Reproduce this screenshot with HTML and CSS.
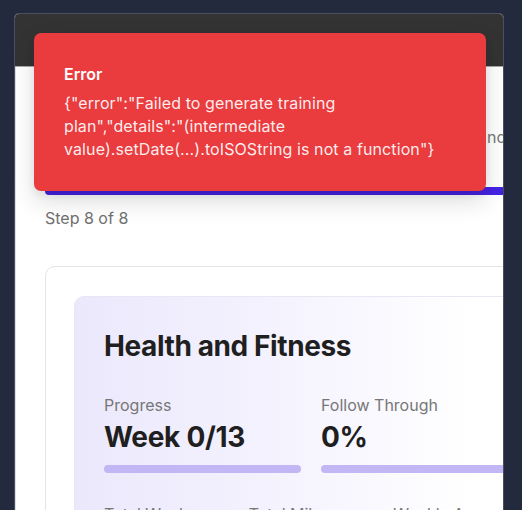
FILE: index.html
```html
<!DOCTYPE html>
<html lang="en">
<head>
<meta charset="utf-8">
<title>Training Plan</title>
<link rel="stylesheet" href="styles.css">
</head>
<body>
<div class="window">
  <div class="titlebar"></div>
  <div class="content">
    <div class="page">
      <h1 class="page-title">Create Your Plan</h1>
      <p class="subtitle"><span class="lead">Review your goals and schedule a</span>nd generate your training plan.</p>
      <div class="progress"><div class="progress-fill"></div></div>
      <p class="step">Step 8 of 8</p>
      <section class="card">
        <div class="plan">
          <h2 class="plan-title">Health and Fitness</h2>
          <div class="stats">
            <div class="stat">
              <div class="stat-label">Progress</div>
              <div class="stat-value">Week 0/13</div>
              <div class="bar"></div>
            </div>
            <div class="stat">
              <div class="stat-label">Follow Through</div>
              <div class="stat-value">0%</div>
              <div class="bar"></div>
            </div>
          </div>
          <div class="totals">
            <div class="stat-label">Total Weeks</div>
            <div class="stat-label">Total Miles</div>
            <div class="stat-label">Weekly Average</div>
          </div>
        </div>
      </section>
    </div>
  </div>
</div>
<div class="toast" role="alert">
  <div class="toast-title">Error</div>
  <div class="toast-body">{"error":"Failed to generate training <span class="nobr">plan","details":"(intermediate</span> <span class="nobr">value).setDate(...).toISOString</span> is not a function"}</div>
</div>
</body>
</html>
```

FILE: styles.css
```css
* { box-sizing: border-box; }
html, body { height: 100%; }
body {
  margin: 0;
  padding: 13px 0 0 14px;
  background: #242a3d;
  font-family: Inter, "Noto Sans", sans-serif;
  overflow: hidden;
}
.window {
  width: 490px;
  height: 497px;
  border: 1px solid #4b5060;
  border-bottom: none;
  border-radius: 5px 5px 0 0;
  overflow: hidden;
  background: #ffffff;
  display: flex;
  flex-direction: column;
}
.titlebar {
  height: 53px;
  flex-shrink: 0;
  background: #333333;
  border-bottom: 1px solid #a9a9a9;
}
.content {
  flex: 1;
  border-left: 1px solid #dedede;
  padding: 30px 0 0 29px;
  overflow: hidden;
}
.page {
  width: 533px;
}
.page-title {
  margin: 0;
  height: 30px;
  font-size: 24px;
  line-height: 30px;
  font-weight: 700;
  color: #1c1c1c;
}
.subtitle {
  margin: 0;
  font-size: 16px;
  line-height: 20px;
  color: #777777;
  white-space: nowrap;
}
.lead {
  display: inline-block;
  width: 442px;
  overflow: hidden;
  vertical-align: bottom;
  color: #777777;
}
.progress {
  margin-top: 40px;
  height: 8px;
  border-radius: 4px;
  background: #e6e3fb;
  overflow: hidden;
}
.progress-fill {
  height: 100%;
  width: 100%;
  background: #4522e4;
}
.step {
  margin: 13px 0 0;
  font-size: 16px;
  line-height: 20px;
  color: #707070;
}
.card {
  margin-top: 38px;
  border: 1px solid #e4e4e4;
  border-radius: 10px;
  padding: 29px 28px;
  background: #ffffff;
}
.plan {
  border: 1px solid #e9e7f4;
  border-radius: 10px;
  padding: 32px 29px 30px 29px;
  background: linear-gradient(90deg, #ebe8fc 0%, #f5f3fe 45%, #ffffff 85%);
}
.plan-title {
  margin: 0;
  font-size: 28px;
  line-height: 34px;
  font-weight: 700;
  color: #1f1f1f;
  letter-spacing: -0.4px;
}
.stats {
  margin-top: 30px;
  display: grid;
  grid-template-columns: 1fr 1fr;
  column-gap: 20px;
  width: 414px;
}
.stat-label {
  font-size: 16px;
  line-height: 24px;
  color: #777777;
  white-space: nowrap;
}
.stat-value {
  margin-top: 3px;
  font-size: 28px;
  line-height: 34px;
  font-weight: 700;
  color: #1f1f1f;
  letter-spacing: -0.3px;
}
.bar {
  margin-top: 11px;
  height: 8px;
  border-radius: 4px;
  background: #c2b6f5;
}
.totals {
  margin-top: 29px;
  display: grid;
  grid-template-columns: 1fr 1fr 1fr;
  column-gap: 20px;
  width: 414px;
}
.toast {
  position: absolute;
  left: 34px;
  top: 33px;
  width: 452px;
  height: 158px;
  padding: 29px 30px 0 30px;
  background: #ea3b3e;
  border-radius: 7px;
  box-shadow: 0 10px 25px rgba(0, 0, 0, 0.14), 0 4px 8px rgba(0, 0, 0, 0.06);
  color: #ffffff;
}
.toast-title {
  font-size: 16px;
  line-height: 24px;
  font-weight: 600;
}
.toast-body {
  margin-top: 6px;
  font-size: 16px;
  line-height: 23px;
  letter-spacing: 0.1px;
  color: rgba(255, 255, 255, 0.92);
}
.nobr {
  white-space: nowrap;
}
```
